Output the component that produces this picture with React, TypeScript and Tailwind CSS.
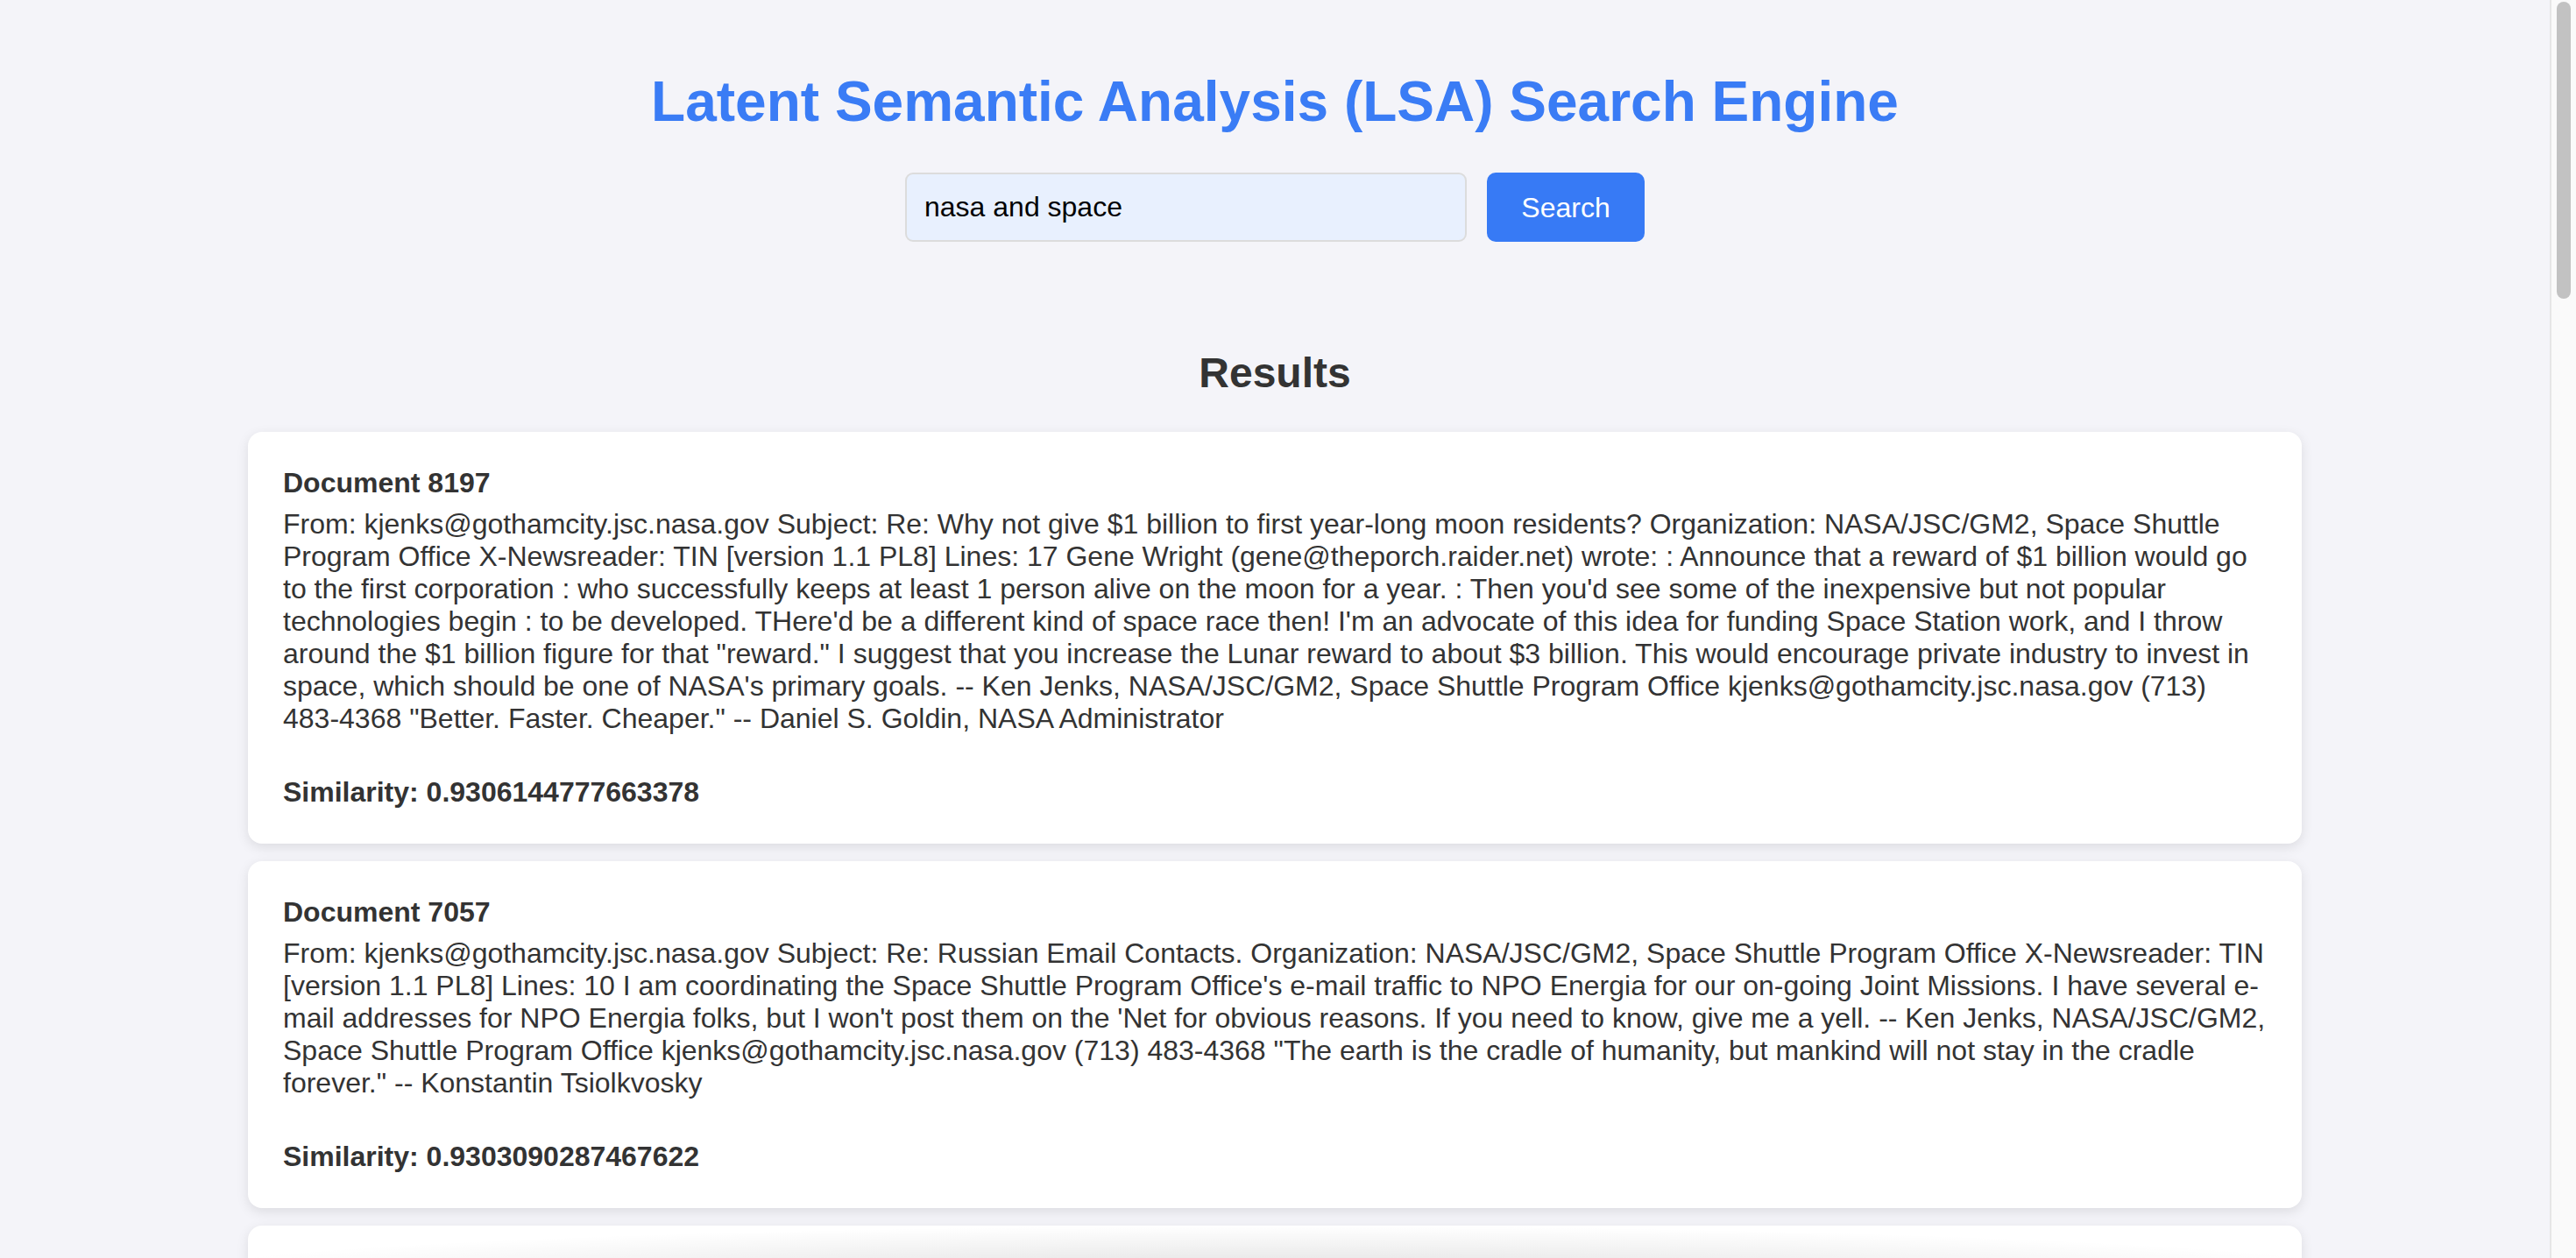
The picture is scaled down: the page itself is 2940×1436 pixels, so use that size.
const results = [
  {
    id: 8197,
    text: `From: kjenks@gothamcity.jsc.nasa.gov Subject: Re: Why not give $1 billion to first year-long moon residents? Organization: NASA/JSC/GM2, Space Shuttle Program Office X-Newsreader: TIN [version 1.1 PL8] Lines: 17 Gene Wright (gene@theporch.raider.net) wrote: : Announce that a reward of $1 billion would go to the first corporation : who successfully keeps at least 1 person alive on the moon for a year. : Then you'd see some of the inexpensive but not popular technologies begin : to be developed. THere'd be a different kind of space race then! I'm an advocate of this idea for funding Space Station work, and I throw around the $1 billion figure for that "reward." I suggest that you increase the Lunar reward to about $3 billion. This would encourage private industry to invest in space, which should be one of NASA's primary goals. -- Ken Jenks, NASA/JSC/GM2, Space Shuttle Program Office kjenks@gothamcity.jsc.nasa.gov (713) 483-4368 "Better. Faster. Cheaper." -- Daniel S. Goldin, NASA Administrator`,
    score: "0.9306144777663378",
  },
  {
    id: 7057,
    text: `From: kjenks@gothamcity.jsc.nasa.gov Subject: Re: Russian Email Contacts. Organization: NASA/JSC/GM2, Space Shuttle Program Office X-Newsreader: TIN [version 1.1 PL8] Lines: 10 I am coordinating the Space Shuttle Program Office's e-mail traffic to NPO Energia for our on-going Joint Missions. I have several e-mail addresses for NPO Energia folks, but I won't post them on the 'Net for obvious reasons. If you need to know, give me a yell. -- Ken Jenks, NASA/JSC/GM2, Space Shuttle Program Office kjenks@gothamcity.jsc.nasa.gov (713) 483-4368 "The earth is the cradle of humanity, but mankind will not stay in the cradle forever." -- Konstantin Tsiolkvosky`,
    score: "0.9303090287467622",
  },
];

export default function App() {
  return (
    <div className="flex h-screen overflow-hidden bg-[#f4f4f9] font-['Liberation_Sans',Arial,sans-serif] text-[#333]">
      <main className="min-w-0 flex-1 overflow-hidden">
        <h1 className="pt-[79px] text-center text-[64px] font-bold leading-[74px] text-[#3a7cf5]">
          Latent Semantic Analysis (LSA) Search Engine
        </h1>

        <form className="mt-[44px] flex justify-center gap-[23px]">
          <input
            type="text"
            defaultValue="nasa and space"
            className="h-[79px] w-[641px] rounded-[9px] border-2 border-[#dcdcdc] bg-[#e8f0fe] px-[20px] text-[32px] text-black outline-none"
          />
          <button
            type="button"
            className="h-[79px] w-[180px] rounded-[10px] bg-[#377af5] text-[32px] text-white"
          >
            Search
          </button>
        </form>

        <h2 className="mt-[122px] text-center text-[48px] font-bold leading-[55px]">
          Results
        </h2>

        <div className="mx-auto mt-[40px] flex w-[2344px] flex-col gap-[20px]">
          {results.map((r) => (
            <div
              key={r.id}
              className="rounded-[16px] bg-white p-[40px] text-[32px] leading-[37px] shadow-[0_4px_14px_rgba(0,0,0,0.1)]"
            >
              <h3 className="mb-[10px] font-bold">Document {r.id}</h3>
              <p className="mb-[47px]">{r.text}</p>
              <p className="font-bold">Similarity: {r.score}</p>
            </div>
          ))}

          {/* next result, only its top edge is in view */}
          <div className="relative h-[400px] overflow-hidden rounded-[16px] bg-white shadow-[0_4px_14px_rgba(0,0,0,0.1)]">
            <div className="absolute inset-x-0 top-0 h-[60px] bg-[radial-gradient(ellipse_55%_100%_at_50%_100%,rgba(0,0,0,0.13),rgba(0,0,0,0.04)_70%,transparent_100%)]" />
          </div>
        </div>
      </main>

      {/* scrollbar */}
      <div className="w-[30px] shrink-0 border-l-2 border-[#e6e6e6] bg-[#fafafa]">
        <div className="ml-[6px] mt-[2px] h-[339px] w-[16px] rounded-full bg-[#c2c2c2]" />
      </div>
    </div>
  );
}
